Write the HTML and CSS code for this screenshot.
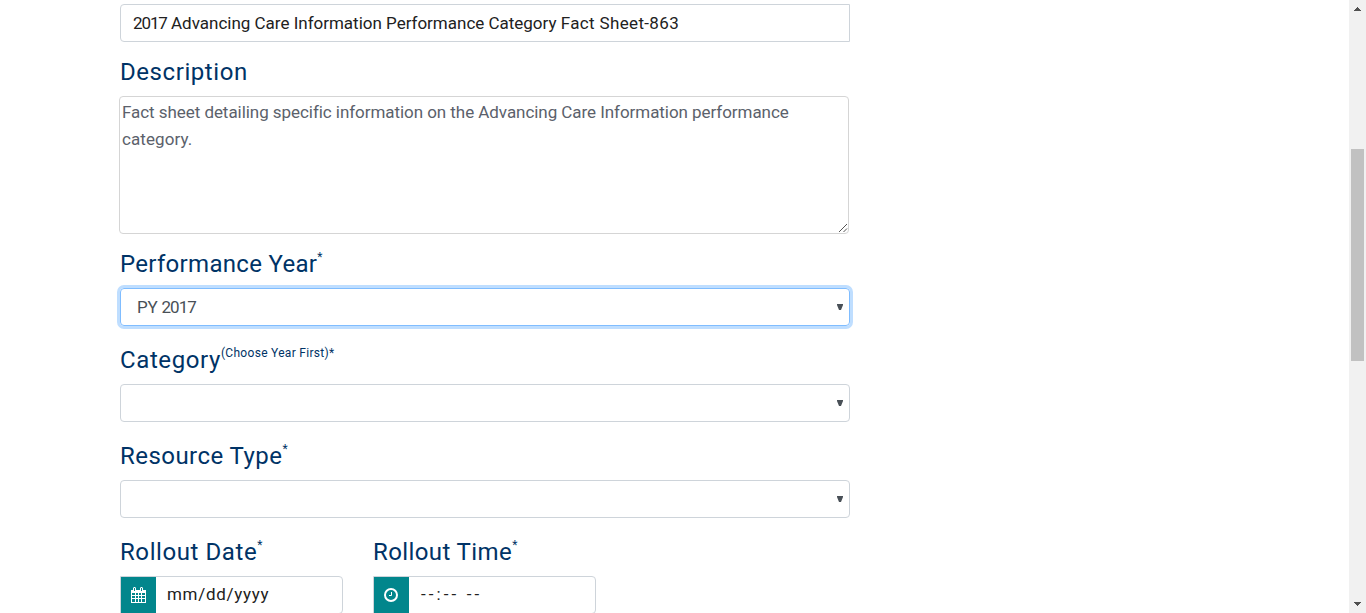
FILE: index.html
```html
<!DOCTYPE html>
<html lang="en">
<head>
<meta charset="utf-8">
<title>Resource form</title>
<link rel="stylesheet" href="styles.css">
</head>
<body>
<div class="page">
  <form class="form">
    <div class="control title-control"><span class="t-title"><span class="year">2017</span> Advancing Care Information Performance Category <span class="tail">Fact Sheet-863</span></span></div>

    <div class="label first"><span class="t-desc">Description</span></div>
    <div class="area"><span class="t-line1">Fact sheet detailing specific information on the Advancing Care Information performance</span><br><span class="t-line2">category.</span>
      <svg class="grip" width="10" height="10" viewBox="0 0 10 10"><path d="M1 9L9 1M5.500 9L9 5.500" stroke="#555" fill="none" stroke-width="1"/></svg>
    </div>

    <div class="label"><span class="t-year">Performance Year</span><span class="sup">*</span></div>
    <div class="control select focused"><span class="t-py">PY <span class="t-num">2017</span></span><svg class="arrow" width="6" height="6" viewBox="0 0 6 6"><path d="M0 0H6V1L4 6H2L0 1Z"/></svg></div>

    <div class="label"><span class="t-cat">Category</span><span class="sup sup-note">(Choose Year First)*</span></div>
    <div class="control select"><svg class="arrow" width="6" height="6" viewBox="0 0 6 6"><path d="M0 0H6V1L4 6H2L0 1Z"/></svg></div>

    <div class="label"><span class="t-type">Resource Type</span><span class="sup">*</span></div>
    <div class="control select"><svg class="arrow" width="6" height="6" viewBox="0 0 6 6"><path d="M0 0H6V1L4 6H2L0 1Z"/></svg></div>

    <div class="pair">
      <div class="field">
        <div class="label"><span class="t-date">Rollout Date</span><span class="sup">*</span></div>
        <div class="group">
          <div class="addon"><svg width="15" height="16" viewBox="0 0 15 16"><path fill="#fff" fill-rule="evenodd" d="M0 3H2V1L3 0H4L5 1V3H9V1L10 0H11L12 1V3H15V16H0ZM3 1V4H4V1ZM10 1V4H11V1ZM1 6V8H4V6ZM5 6V8H7V6ZM8 6V8H10V6ZM11 6V8H14V6ZM1 9V11H4V9ZM5 9V11H7V9ZM8 9V11H10V9ZM11 9V11H14V9ZM1 12V15H4V12ZM5 12V15H7V12ZM8 12V15H10V12ZM11 12V15H14V12Z"/></svg></div>
          <span class="t-mm">mm/dd/yyyy</span>
        </div>
      </div>
      <div class="field">
        <div class="label"><span class="t-time">Rollout Time</span><span class="sup">*</span></div>
        <div class="group time-group">
          <div class="addon"><svg width="14" height="14" viewBox="0 0 14 14" fill="none" stroke="#fff"><circle cx="7" cy="7" r="6" stroke-width="2"/><path d="M7.500 4V7.500H5"/></svg></div>
          <span class="t-dash">--:-- --</span>
        </div>
      </div>
    </div>
  </form>
  <div class="scrollbar">
    <svg width="7" height="4" viewBox="0 0 7 4"><path fill="#505050" d="M3 0H4V1H5V2H6V3H7V4H0V3H1V2H2V1H3Z"/></svg>
    <div class="thumb"></div>
    <svg width="7" height="4" viewBox="0 0 7 4"><path fill="#505050" d="M0 0H7V1H6V2H5V3H4V4H3V3H2V2H1V1H0Z"/></svg>
  </div>
</div>
</body>
</html>
```
FILE: styles.css
```css
* { box-sizing: border-box; }
body { margin: 0; background: #fff; font-family: Roboto, "Liberation Sans", sans-serif; }
.page { display: flex; justify-content: space-between; height: 613px; overflow: hidden; }
.form { width: 730px; margin-left: 120px; padding-top: 4px; flex: none; }
.form span { white-space: nowrap; }
.control { display: flex; align-items: center; height: 38px; border: 1px solid #ced4da; border-radius: 4px; padding: 0 12px; font-size: 17px; color: #212121; }
.title-control { border-radius: 4px 0 0 4px; }
.label { display: flex; height: 58px; padding-top: 19px; line-height: 30px; font-size: 24px; color: #003366; }
.label.first { padding-top: 15px; }
.area { position: relative; width: 730px; height: 138px; margin: -4px 0 0 -1px; border: 1px solid #d5d5d5; border-radius: 4px; padding: 2px; font-size: 17px; line-height: 27px; color: #5b616b; }
.grip { position: absolute; right: 0; bottom: 0; }
.area + .label { height: 54px; padding-top: 15px; }
.select { justify-content: flex-end; padding-right: 6px; }
.select .t-py { margin: 0 auto 0 4px; color: #495057; }
.arrow { fill: #495057; }
.focused { border-color: #80bdff; box-shadow: 0 0 0 3px #bfdeff; }
.sup { font-size: 12px; line-height: 16px; }
.sup-note { letter-spacing: 0.3px; }
.t-title { letter-spacing: -0.01px; }
.year { letter-spacing: -1.1px; }
.tail { letter-spacing: 0.35px; }
.t-desc { letter-spacing: 0.57px; }
.t-line1 { letter-spacing: -0.055px; }
.t-line2 { letter-spacing: 0.1px; }
.t-py { letter-spacing: -0.2px; }
.t-num { letter-spacing: -1px; }
.t-year { letter-spacing: 0.31px; }
.t-cat { letter-spacing: 0.6px; }
.t-type { letter-spacing: 0.45px; }
.t-date { letter-spacing: 0.58px; }
.t-time { letter-spacing: 0.4px; }
.t-mm { letter-spacing: 0.7px; }
.t-dash { letter-spacing: 3.1px; }
.pair { display: flex; gap: 30px; }
.field { width: 223px; }
.group { display: flex; align-items: center; height: 38px; border: 1px solid #ced4da; border-radius: 0 4px 4px 0; font-size: 17px; color: #212121; }
.group > span { padding-bottom: 2px; }
.addon { display: flex; align-items: center; justify-content: center; width: 35px; height: 36px; margin-right: 11px; background: #02868c; }
.time-group .addon { padding-right: 1px; margin-right: 12px; }
.scrollbar { display: flex; flex-direction: column; align-items: center; justify-content: space-between; width: 17px; padding: 7px 0; background: #f1f1f1; }
.thumb { width: 13px; height: 212px; margin-bottom: 104px; background: #c1c1c1; }
```
